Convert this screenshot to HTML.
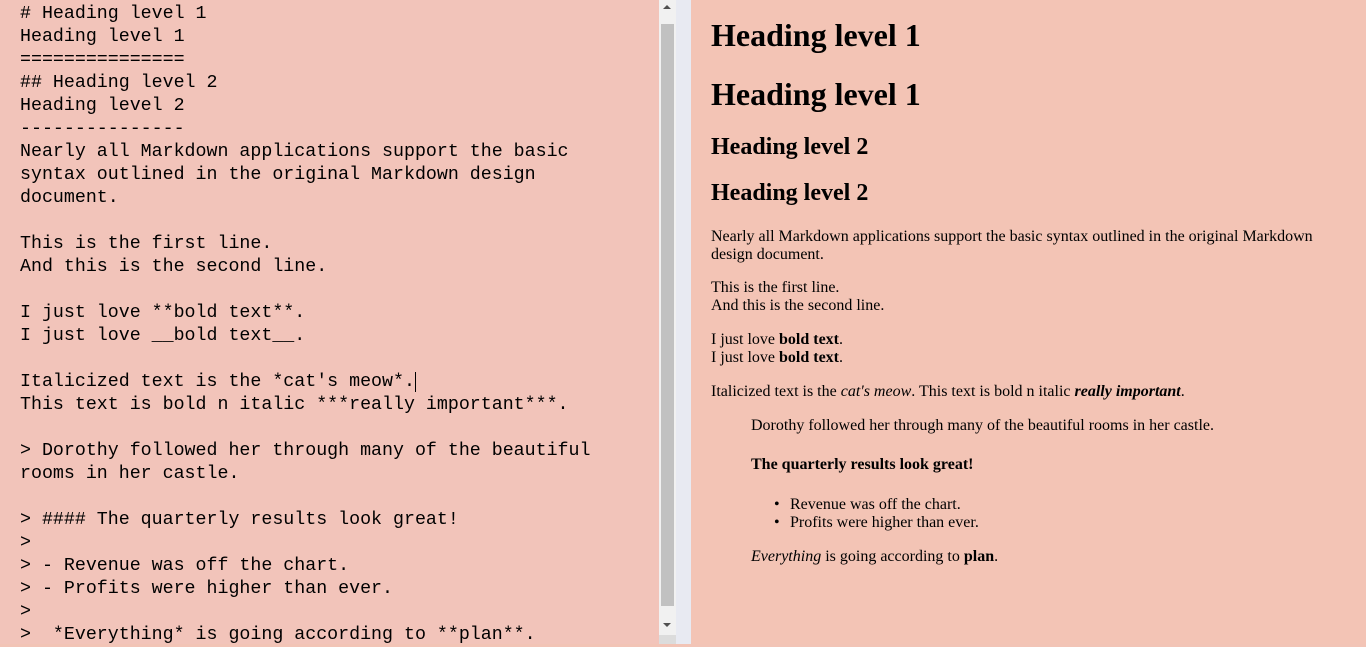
<!DOCTYPE html>
<html><head><meta charset="utf-8"><style>
html,body{margin:0;padding:0;width:1366px;height:644px;overflow:hidden;background:#f2c4b6}
#ed{position:absolute;left:0;top:0;width:659px;height:644px;background:#f2c4ba}
#ed pre{margin:0;position:absolute;left:20px;top:3px;font:18.3px/23px "Liberation Mono",monospace;color:#000}
#sb{position:absolute;left:659px;top:0;width:17px;height:644px;background:#f1f1f1}
#th{position:absolute;left:661px;top:24px;width:13px;height:582px;background:#c1c1c1}
#gap{position:absolute;left:676px;top:0;width:15px;height:644px;background:#e8eaf2}
#pv{position:absolute;left:691px;top:0;width:675px;height:644px;background:#f3c4b5;font-family:"Liberation Serif",serif;color:#000}
#pv div{position:absolute;left:20px;white-space:nowrap}
.h1{font-size:32px;font-weight:bold;line-height:36px}
.h2{font-size:24px;font-weight:bold;line-height:26px}
.p{font-size:16px;line-height:18px}
</style></head><body>
<div id="ed"><pre># Heading level 1
Heading level 1
===============
## Heading level 2
Heading level 2
---------------
Nearly all Markdown applications support the basic
syntax outlined in the original Markdown design
document.

This is the first line.
And this is the second line.

I just love **bold text**.
I just love __bold text__.

Italicized text is the *cat's meow*.<span style="border-left:1px solid #000"></span>
This text is bold n italic ***really important***.

&gt; Dorothy followed her through many of the beautiful
rooms in her castle.

&gt; #### The quarterly results look great!
&gt;
&gt; - Revenue was off the chart.
&gt; - Profits were higher than ever.
&gt;
&gt;  *Everything* is going according to **plan**.</pre></div>
<div id="sb"></div><div id="th"></div>
<div style="position:absolute;left:663px;top:5px;width:0;height:0;border-left:4px solid transparent;border-right:4px solid transparent;border-bottom:4px solid #505050"></div>
<div style="position:absolute;left:663px;top:623px;width:0;height:0;border-left:4px solid transparent;border-right:4px solid transparent;border-top:4px solid #505050"></div>
<div style="position:absolute;left:659px;top:635px;width:17px;height:9px;background:#dcdcdc"></div>
<div id="gap"></div>
<div id="pv">
<div class="h1" style="top:17px">Heading level 1</div>
<div class="h1" style="top:76px">Heading level 1</div>
<div class="h2" style="top:134px">Heading level 2</div>
<div class="h2" style="top:180px">Heading level 2</div>
<div class="p" style="top:228px">Nearly all Markdown applications support the basic syntax outlined in the original Markdown<br>design document.</div>
<div class="p" style="top:279px">This is the first line.<br>And this is the second line.</div>
<div class="p" style="top:331px">I just love <b>bold text</b>.<br>I just love <b>bold text</b>.</div>
<div class="p" style="top:383px">Italicized text is the <i>cat's meow</i>. This text is bold n italic <b><i>really important</i></b>.</div>
<div class="p" style="top:417px;left:60px">Dorothy followed her through many of the beautiful rooms in her castle.</div>
<div class="p" style="top:456px;left:60px"><b>The quarterly results look great!</b></div>
<div class="p" style="top:496px;left:83px">•</div>
<div class="p" style="top:514px;left:83px">•</div>
<div class="p" style="top:496px;left:99px">Revenue was off the chart.<br>Profits were higher than ever.</div>
<div class="p" style="top:548px;left:60px"><i>Everything</i> is going according to <b>plan</b>.</div>
</div>
</body></html>
